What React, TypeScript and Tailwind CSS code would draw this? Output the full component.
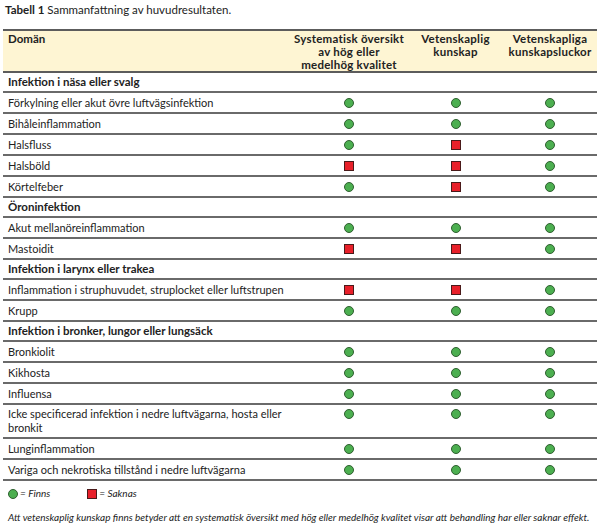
import React from 'react'

type Mark = 'y' | 'n'
type Row =
  | { kind: 'group'; label: string }
  | { kind: 'item'; label: string; marks: Mark[]; second?: string }

const rows: Row[] = [
  { kind: 'group', label: 'Infektion i näsa eller svalg' },
  { kind: 'item', label: 'Förkylning eller akut övre luftvägsinfektion', marks: ['y', 'y', 'y'] },
  { kind: 'item', label: 'Bihåleinflammation', marks: ['y', 'y', 'y'] },
  { kind: 'item', label: 'Halsfluss', marks: ['y', 'n', 'y'] },
  { kind: 'item', label: 'Halsböld', marks: ['n', 'n', 'y'] },
  { kind: 'item', label: 'Körtelfeber', marks: ['y', 'n', 'y'] },
  { kind: 'group', label: 'Öroninfektion' },
  { kind: 'item', label: 'Akut mellanöreinflammation', marks: ['y', 'y', 'y'] },
  { kind: 'item', label: 'Mastoidit', marks: ['n', 'n', 'y'] },
  { kind: 'group', label: 'Infektion i larynx eller trakea' },
  { kind: 'item', label: 'Inflammation i struphuvudet, struplocket eller luftstrupen', marks: ['n', 'n', 'y'] },
  { kind: 'item', label: 'Krupp', marks: ['y', 'y', 'y'] },
  { kind: 'group', label: 'Infektion i bronker, lungor eller lungsäck' },
  { kind: 'item', label: 'Bronkiolit', marks: ['y', 'y', 'y'] },
  { kind: 'item', label: 'Kikhosta', marks: ['y', 'y', 'y'] },
  { kind: 'item', label: 'Influensa', marks: ['y', 'y', 'y'] },
  {
    kind: 'item',
    label: 'Icke specificerad infektion i nedre luftvägarna, hosta eller',
    second: 'bronkit',
    marks: ['y', 'y', 'y'],
  },
  { kind: 'item', label: 'Lunginflammation', marks: ['y', 'y', 'y'] },
  { kind: 'item', label: 'Variga och nekrotiska tillstånd i nedre luftvägarna', marks: ['y', 'y', 'y'] },
]

const cols = 'grid grid-cols-[287px_118px_95px_94px]'

function Dot() {
  return <span className="block w-[10px] h-[10px] rounded-full bg-[#4caf50] border border-[#2f5f30]" />
}

function Square() {
  return <span className="block w-[10px] h-[10px] bg-[#e8202a] border border-[#4a1a1a]" />
}

export default function App() {
  return (
    <div className="w-[600px] h-[524px] bg-white text-[#222] font-['Lato',sans-serif] overflow-hidden">
      <div className="pl-[5px] pt-[2px] text-[11.5px] leading-[15px]">
        <span className="font-bold">Tabell 1</span> Sammanfattning av huvudresultaten.
      </div>

      <div className="ml-[3px] mt-[12px] w-[594px]">
        <div
          className={`${cols} h-[44px] bg-[#fef5d3] border-y-2 border-[#5c5c5c] text-[11.5px] leading-[13px] tracking-[0.25px] font-bold`}
        >
          <div className="pl-[5px] pt-[1px] tracking-normal">Domän</div>
          <div className="text-center pt-[1px] whitespace-nowrap">
            Systematisk översikt
            <br />
            av hög eller
            <br />
            medelhög kvalitet
          </div>
          <div className="text-center pt-[1px]">
            Vetenskaplig
            <br />
            kunskap
          </div>
          <div className="text-center pt-[1px] whitespace-nowrap">
            Vetenskapliga
            <br />
            kunskapsluckor
          </div>
        </div>

        {rows.map((row, i) =>
          row.kind === 'group' ? (
            <div
              key={i}
              className="h-[20px] border-b-2 border-[#6a6a6a] pl-[5px] flex items-center text-[11.5px] font-bold"
            >
              {row.label}
            </div>
          ) : (
            <div
              key={i}
              className={`${cols} ${row.second ? 'h-[34px]' : 'h-[21px]'} border-b-2 border-[#6a6a6a] text-[11px]`}
            >
              <div
                className={`pl-[5px] leading-[14px] whitespace-nowrap ${row.second ? 'pt-[2px]' : 'flex items-center'}`}
              >
                {row.label}
                {row.second && (
                  <>
                    <br />
                    {row.second}
                  </>
                )}
              </div>
              {row.marks.map((m, j) => (
                <div key={j} className={`flex justify-center ${row.second ? 'pt-[4px]' : 'items-center'}`}>
                  {m === 'y' ? <Dot /> : <Square />}
                </div>
              ))}
            </div>
          )
        )}

        <div className="flex items-center mt-[5px] pl-[5px] text-[10px] italic">
          <Dot />
          <span className="ml-[2px]">= Finns</span>
          <span className="ml-[37px]">
            <Square />
          </span>
          <span className="ml-[2px]">= Saknas</span>
        </div>

        <div className="mt-[10px] pl-[5px] text-[10px] leading-[13px] italic whitespace-nowrap">
          Att vetenskaplig kunskap finns betyder att en systematisk översikt med hög eller medelhög kvalitet visar att
          behandling har eller saknar effekt.
        </div>
      </div>
    </div>
  )
}
